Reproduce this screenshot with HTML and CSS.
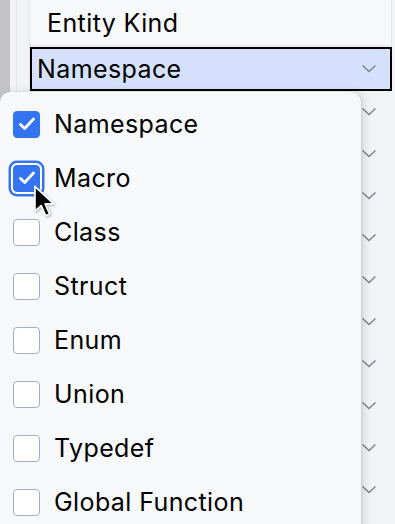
FILE: index.html
```html
<!DOCTYPE html>
<html lang="en">
<head>
  <meta charset="UTF-8">
  <title>Entity Kind filter</title>
  <link rel="stylesheet" href="styles.css">
</head>
<body>
  <div class="app">
    <div class="gutter"></div>
    <div class="strip"></div>

    <div class="table">
      <div class="head-cell">Entity Kind</div>
      <div class="editor-cell">
        <span>Namespace</span>
        <svg class="chev" width="16" height="10" viewBox="0 0 16 10"><path d="M1.5 1.5l6.5 6 6.5-6" fill="none" stroke="#818594" stroke-width="1.6"/></svg>
      </div>
      <div class="rows" id="rows"></div>
    </div>
  </div>

  <div class="popup">
    <ul class="kinds" id="kinds"></ul>
  </div>

  <svg class="cursor" width="24" height="34" viewBox="0 0 20 30">
    <path d="M2 2v22l5.5-5 4 9 3.5-1.6-4-8.8h7.5z" fill="#000" stroke="#fff" stroke-width="1.5" stroke-linejoin="round"/>
  </svg>

  <script>
    // Kinds shown in the filter popup
    const kinds = [
      { name: 'Namespace', checked: true },
      { name: 'Macro', checked: true, focused: true },
      { name: 'Class' },
      { name: 'Struct' },
      { name: 'Enum' },
      { name: 'Union' },
      { name: 'Typedef' },
      { name: 'Global Function' }
    ];

    const tick = '<svg width="18" height="14" viewBox="0 0 18 14"><path d="M2.5 7.5l4.2 4 8.8-9.5" fill="none" stroke="#fff" stroke-width="2.8" stroke-linecap="round" stroke-linejoin="round"/></svg>';
    const chev = '<svg class="chev" width="16" height="10" viewBox="0 0 16 10"><path d="M1.5 1.5l6.5 6 6.5-6" fill="none" stroke="#818594" stroke-width="1.6"/></svg>';

    const list = document.getElementById('kinds');
    kinds.forEach(k => {
      const li = document.createElement('li');
      li.className = 'kind';
      let cls = 'box';
      if (k.checked) cls += ' on';
      if (k.focused) cls += ' focus';
      li.innerHTML = `<span class="${cls}">${k.checked ? tick : ''}</span><span class="label">${k.name}</span>`;
      list.appendChild(li);
    });

    // Table rows behind the popup, only their chevrons peek out
    const rows = document.getElementById('rows');
    for (let i = 0; i < 11; i++) {
      const row = document.createElement('div');
      row.className = 'row';
      row.innerHTML = chev;
      rows.appendChild(row);
    }
  </script>
</body>
</html>
```

FILE: styles.css
```css
* {
  margin: 0;
  padding: 0;
  box-sizing: border-box;
}
body {
  width: 395px;
  height: 524px;
  overflow: hidden;
  background: #f2f3f5;
  font-family: Inter, 'Noto Sans', sans-serif;
  letter-spacing: 0.4px;
  color: #000;
  position: relative;
}
.app {
  display: flex;
  height: 100%;
}
.gutter {
  width: 10px;
  background: #c4c4c6;
}
.strip {
  width: 20px;
  background: #f2f3f5;
  border-right: 1px solid #e4e5e8;
  position: relative;
}
.strip::after {
  content: '';
  position: absolute;
  top: 0;
  bottom: 0;
  left: 6px;
  width: 1px;
  background: #e6e7ea;
}
.table {
  width: 362px;
  display: flex;
  flex-direction: column;
}
.head-cell {
  flex-shrink: 0;
  height: 46px;
  padding-left: 17px;
  display: flex;
  align-items: center;
  font-size: 25px;
  background: #f7f8fa;
  border-bottom: 1px solid #e4e5e8;
  border-right: 1px solid #e4e5e8;
}
.editor-cell {
  flex-shrink: 0;
  height: 44px;
  margin-top: 1px;
  display: flex;
  align-items: center;
  justify-content: space-between;
  padding: 0 13px 0 5px;
  font-size: 25px;
  background: #d5e0fd;
  border: 2px solid #000;
}
.rows {
  display: flex;
  flex-direction: column;
}
.row {
  flex-shrink: 0;
  height: 42px;
  display: flex;
  align-items: center;
  justify-content: flex-end;
  padding-right: 15px;
}
.popup {
  position: absolute;
  top: 92px;
  left: 0;
  width: 361px;
  height: 460px;
  background: #f7f8fa;
  border-radius: 10px;
  box-shadow: 3px 0 10px rgba(0, 0, 0, 0.12), 1px 0 2px rgba(0, 0, 0, 0.08);
}
.kinds {
  list-style: none;
  padding-top: 5px;
}
.kind {
  height: 54px;
  display: flex;
  align-items: center;
  padding-left: 13px;
  gap: 14px;
  font-size: 25px;
}
.box {
  width: 27px;
  height: 27px;
  border-radius: 4px;
  border: 1.5px solid #a8adbd;
  background: #fff;
  display: flex;
  align-items: center;
  justify-content: center;
  flex-shrink: 0;
}
.box.on {
  background: #3574f0;
  border-color: #3574f0;
}
.box.focus {
  box-shadow: 0 0 0 2px #fff, 0 0 0 4.5px #3574f0;
}
.cursor {
  position: absolute;
  left: 32px;
  top: 184px;
  filter: drop-shadow(1px 1px 1px rgba(0, 0, 0, 0.3));
}
```
